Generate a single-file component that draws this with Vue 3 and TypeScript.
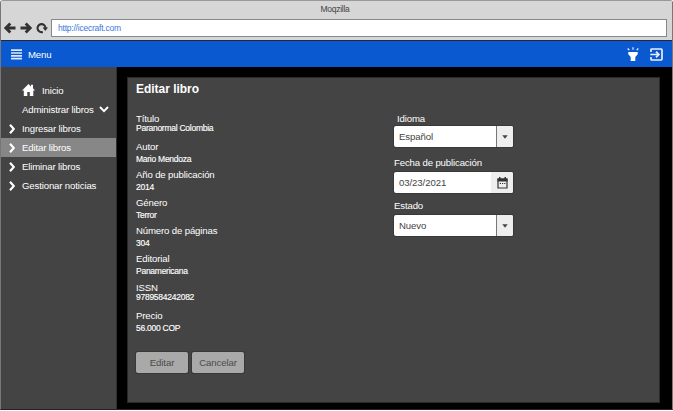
<script setup lang="ts">
interface Field { label: string; value: string; tight?: boolean }
interface NavItem { label: string; active?: boolean }

const navItems: NavItem[] = [
  { label: 'Ingresar libros' },
  { label: 'Editar libros', active: true },
  { label: 'Eliminar libros' },
  { label: 'Gestionar noticias' },
]

const fields: Field[] = [
  { label: 'Título', value: 'Paranormal Colombia', tight: true },
  { label: 'Autor', value: 'Mario Mendoza' },
  { label: 'Año de publicación', value: '2014' },
  { label: 'Género', value: 'Terror' },
  { label: 'Número de páginas', value: '304' },
  { label: 'Editorial', value: 'Panamericana' },
  { label: 'ISSN', value: '9789584242082', tight: true },
  { label: 'Precio', value: '56.000 COP' },
]
</script>

<template>
  <div class="window">
    <header class="chrome">
      <div class="title">Moqzilla</div>
      <div class="toolbar">
        <svg class="nav-ic" viewBox="0 0 12 12"><path d="M11.500 6H2M6.300 1.500L1.800 6L6.300 10.500" /></svg>
        <svg class="nav-ic" viewBox="0 0 12 12"><path d="M.5 6H10M5.700 1.500L10.200 6L5.700 10.500" /></svg>
        <svg class="nav-ic reload" viewBox="0 0 12 12"><path d="M6.800 9.900A4 4 0 1 1 9.500 6" /><path class="solid" d="M6.600 5.500h5.400L9.300 8.900z" /></svg>
        <div class="url">http://icecraft.com</div>
      </div>
    </header>

    <div class="appbar">
      <svg class="burger" viewBox="0 0 11 11"><path d="M0 1.200h11M0 4h11M0 6.800h11M0 9.600h11" /></svg>
      <span class="menu">Menu</span>
      <svg class="torch" viewBox="0 0 12 14"><path class="solid" d="M1.300 5h9.400v2.200L8.300 10v4H3.700v-4L1.300 7.200z" /><path d="M6 .3v2.400M.7 1.500l1.600 1.600M11.300 1.500L9.700 3.100" /></svg>
      <svg class="exit" viewBox="0 0 13 13"><path d="M1 4V1.900q0-.9.9-.9h9.200q.9 0 .9.9v9.200q0 .9-.9.9H1.900q-.9 0-.9-.9V9M.3 6.500h8.500M6 3.600l2.900 2.900L6 9.400" /></svg>
    </div>

    <div class="body">
      <nav class="side">
        <div class="home">
          <svg class="house" viewBox="0 0 13 12"><path d="M6.500 0L0 6.400h1.800V12h3.500V8h2.500v4h3.500V6.400H13L11 4.300V.8H9v1.600z" /></svg>
          <span>Inicio</span>
        </div>
        <div class="group">
          <span>Administrar libros</span>
          <svg class="down" viewBox="0 0 10 7"><path d="M1 1l4 4.200l4-4.200" /></svg>
        </div>
        <div v-for="item in navItems" :key="item.label" class="item" :class="{ active: item.active }">
          <svg class="chev" viewBox="0 0 6 10"><path d="M1 .8L4.800 5L1 9.200" /></svg>
          <span>{{ item.label }}</span>
        </div>
      </nav>

      <main class="stage">
        <section class="card">
          <h1>Editar libro</h1>
          <div class="cols">
            <div class="left">
              <div v-for="f in fields" :key="f.label" class="field" :class="{ tight: f.tight }">
                <div class="label">{{ f.label }}</div>
                <div class="value">{{ f.value }}</div>
              </div>
              <div class="actions">
                <button type="button" class="btn">Editar</button>
                <button type="button" class="btn">Cancelar</button>
              </div>
            </div>
            <div class="right">
              <div class="label indent">Idioma</div>
              <div class="select">
                <span class="text">Español</span>
                <span class="drop"><svg viewBox="0 0 6 4"><path d="M.3.300h5.400L3 3.700z" /></svg></span>
              </div>
              <div class="label date-label">Fecha de publicación</div>
              <div class="select lower">
                <span class="text">03/23/2021</span>
                <span class="cal"><svg viewBox="0 0 11 12"><path d="M1 2h9v9H1z" /><path class="solid" d="M.5 1.500h10v3H.5zM2 0h1.500v2H2zM7.500 0H9v2H7.500z" /><path class="dots" d="M2.800 6.500h5.600" /></svg></span>
              </div>
              <div class="label state-label">Estado</div>
              <div class="select lower">
                <span class="text">Nuevo</span>
                <span class="drop"><svg viewBox="0 0 6 4"><path d="M.3.300h5.400L3 3.700z" /></svg></span>
              </div>
            </div>
          </div>
        </section>
      </main>
    </div>
  </div>
</template>

<style>
body { background: #fff; overflow: hidden; }
</style>

<style scoped>
* { box-sizing: border-box; }
svg { display: block; flex: none; fill: none; }
.window {
  width: 673px; height: 410px; display: flex; flex-direction: column;
  font-family: "Liberation Sans", Arial, sans-serif; font-size: 9.6px; letter-spacing: -.14px; color: #fff;
  border: 1px solid #777; border-top-color: #999; border-bottom-color: #222;
  border-radius: 3px 3px 0 0; overflow: hidden; white-space: nowrap;
}
.chrome { height: 40px; background: #d6d6d6; border-bottom: 1px solid #282828; flex: none; }
.title { height: 18px; line-height: 17px; text-align: center; font-size: 8.500px; letter-spacing: -.27px; color: #444; padding-right: 3px; }
.toolbar { display: flex; align-items: center; padding-left: 3px; }
.nav-ic { width: 12px; height: 12px; margin-right: 4px; stroke: #333; stroke-width: 2.800; }
.reload { stroke-width: 2.100; margin-right: 3px; }
.reload .solid { fill: #333; stroke: none; }
.url {
  width: 616px; height: 18px; line-height: 16px; background: #fff; border: 1px solid #888;
  padding-left: 6px; font-size: 8.500px; letter-spacing: -.22px; color: #3c78e0;
}
.appbar { height: 26px; flex: none; background: #0b59d0; display: flex; align-items: center; padding-left: 10px; }
.burger { width: 11px; height: 11px; stroke: #dde6fa; stroke-width: 1.700; margin-right: 6px; }
.menu { flex: 1; }
.torch { width: 12px; height: 14px; stroke: #fff; stroke-width: 1.100; margin-right: 11px; }
.torch .solid { fill: #fff; stroke: none; }
.exit { width: 13px; height: 13px; stroke: #e9effc; stroke-width: 1.700; margin-right: 9px; }
.body { flex: 1; display: flex; background: #000; min-height: 0; }
.side { width: 116px; background: #444; border-right: 1px solid #303030; padding-top: 13px; }
.home { height: 20px; display: flex; align-items: center; padding-left: 21px; gap: 7px; }
.house { width: 13px; height: 12px; }
.house path { fill: #fff; }
.group { height: 19px; display: flex; align-items: center; padding-left: 21px; gap: 5px; }
.down { width: 10px; height: 7px; stroke: #fff; stroke-width: 1.900; }
.item { height: 19px; display: flex; align-items: center; padding-left: 8px; gap: 7px; }
.item.active { background: #878787; }
.chev { width: 6px; height: 10px; stroke: #fff; stroke-width: 2.200; }
.stage { flex: 1; padding: 10px 12px 6px 10px; }
.card { height: 326px; background: #444; border: 1px solid #292929; padding: 3px 0 0 8px; }
h1 { margin: 0; font-size: 11.950px; letter-spacing: 0; line-height: 16px; font-weight: 700; }
.cols { display: flex; padding-top: 16px; }
.left { width: 258px; }
.field { height: 28.100px; }
.label { line-height: 12px; }
.value { font-size: 8.500px; letter-spacing: -.26px; line-height: 10px; margin-top: 1px; -webkit-text-stroke: .15px #fff; }
.tight .value { margin-top: -2px; }
.actions { display: flex; gap: 4px; padding-top: 14px; }
.btn {
  width: 52px; height: 21px; padding: 0; border: 0; border-radius: 2px; background: #a9a9a9;
  font-family: inherit; font-size: 9.600px; letter-spacing: -.1px; color: #4b4b4b; box-shadow: 0 0 0 1px #383838;
}
.right { width: 120px; }
.indent { padding-left: 3px; }
.select {
  width: 119px; height: 21px; margin-top: 1px; background: #fff; border-radius: 2px; display: flex;
  align-items: center; color: #444; overflow: hidden; box-shadow: 0 0 0 1px #383838; letter-spacing: -.08px;
}
.select.lower { margin-top: 3px; }
.text { flex: 1; padding-left: 5px; }
.drop, .cal { height: 21px; display: flex; align-items: center; justify-content: center; background: #eee; }
.drop { width: 17px; border-left: 1px solid #777; }
.drop svg { width: 6px; height: 4px; }
.drop path { fill: #444; }
.cal { width: 22px; }
.cal svg { width: 11px; height: 12px; stroke: #333; stroke-width: 1.200; }
.cal .solid { fill: #333; stroke: none; }
.cal .dots { stroke-dasharray: 1.200 1; }
.date-label { margin-top: 10px; }
.state-label { margin-top: 7px; }
</style>
